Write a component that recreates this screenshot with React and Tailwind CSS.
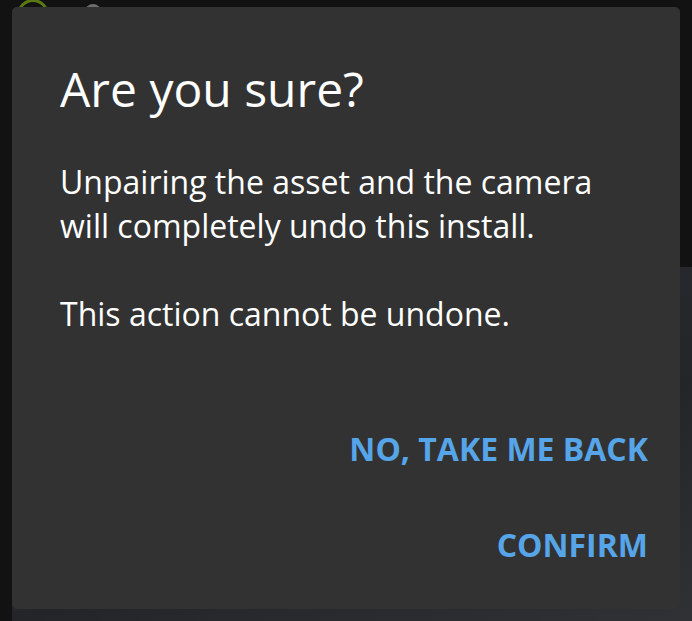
import React from 'react';

const App = () => {
    return (
        <div className="relative h-[621px] w-full overflow-hidden bg-[#121212] font-['Open_Sans',sans-serif]">
            {/* app behind the modal */}
            <div className="absolute left-[17px] top-[-1px] h-8 w-8 rounded-full border-[3px] border-[#587a10]" />
            <div className="absolute left-[85px] top-1 h-4 w-4 rounded-full bg-[#6e6e6e]" />
            <div className="absolute bottom-0 left-3 right-0 top-[267px] bg-[linear-gradient(160deg,#2c2e33,#232529_60%,#303135)]" />

            <div className="relative flex h-full flex-col px-3 pb-3 pt-[7px]">
                <div className="flex flex-1 flex-col rounded-[5px] bg-[#323232]">
                    <h2 className="px-12 pt-[50px] text-[48px] leading-[64px] font-normal text-white">
                        Are you sure?
                    </h2>
                    <div className="px-12 pt-[39px] text-[32px] leading-[44px] text-white">
                        <p>Unpairing the asset and the camera will completely undo this install.</p>
                        <p className="mt-[44px]">This action cannot be undone.</p>
                    </div>
                    <div className="mt-auto flex flex-col items-end px-4 pb-4">
                        <button className="h-24 px-4 text-[32px] leading-[48px] font-bold uppercase text-[#56a5e8]">
                            No, take me back
                        </button>
                        <button className="h-24 px-4 text-[32px] leading-[48px] font-bold uppercase text-[#56a5e8]">
                            Confirm
                        </button>
                    </div>
                </div>
            </div>
        </div>
    );
};

export default App;
